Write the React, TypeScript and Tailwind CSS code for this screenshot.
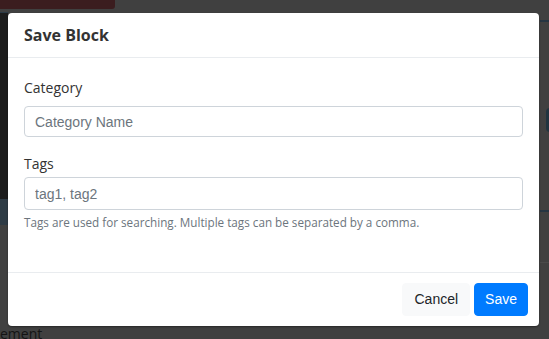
import { useState } from "react";

const sans = "font-['Open_Sans',sans-serif]";
const arial = "font-['Liberation_Sans',Arial,sans-serif]";

// Dimmed page that sits behind the dialog
function BackdropPage() {
  return (
    <div className="flex h-full w-full flex-col bg-[#404040]">
      <div className="h-[9px] w-[115px] rounded-br-[3px] bg-[#3b1d1f]" />
      <div className="flex flex-1">
        <div className="flex w-[8px] flex-col">
          <div className="mt-[3px] h-[1px] bg-[#2b3a46]" />
          <div className="h-[186px] bg-[#1c1c1c]" />
          <div className="h-[26px] bg-[#2e3b45]" />
        </div>
        <div className="flex-1" />
        <div className="flex w-[9px] flex-col">
          <div className="mt-[11px] h-[2px] bg-[#263542]" />
          <div className="mt-[86px] ml-[6px] h-[24px] w-[8px] rounded-full bg-[#21343f]" />
          <div className="mt-[78px] h-[2px] bg-[#263542]" />
          <div className="mt-[50px] h-[1px] bg-[#4a4a4a]" />
        </div>
      </div>
      <div className={`${sans} h-[12px] text-[14px] leading-[14px] text-[#141414]`}>ement</div>
    </div>
  );
}

export default function App() {
  const [category, setCategory] = useState("");
  const [tags, setTags] = useState("");

  return (
    <div className="relative h-[339px] w-[549px] overflow-hidden">
      <BackdropPage />

      {/* Modal */}
      <div className="absolute left-[8px] top-[13px] flex h-[313px] w-[531px] flex-col rounded-[4px] bg-white shadow-[0_1px_2px_rgba(0,0,0,0.4)]">
        <div className="border-b border-[#e9ecef] px-[16px] py-[10px]">
          <h5 className={`${sans} text-[16px] font-bold leading-[24px] text-[#333]`}>Save Block</h5>
        </div>

        <div className="flex-1 px-[16px] pt-[19px]">
          <div className="mb-[16px]">
            <label className={`${sans} mb-[8px] block text-[14px] leading-[21px] text-[#333]`}>Category</label>
            <input
              value={category}
              onChange={(e) => setCategory(e.target.value)}
              placeholder="Category Name"
              className={`${arial} block h-[31px] w-full rounded-[4px] border border-[#ced4da] px-[10px] text-[14px] text-[#495057] outline-none placeholder:text-[#6c757d]`}
            />
          </div>
          <div>
            <label className={`${sans} mb-[3px] block text-[14px] leading-[21px] text-[#333]`}>Tags</label>
            <input
              value={tags}
              onChange={(e) => setTags(e.target.value)}
              placeholder="tag1, tag2"
              className={`${arial} block h-[33px] w-full rounded-[4px] border border-[#ced4da] px-[10px] text-[14px] text-[#495057] outline-none placeholder:text-[#6c757d]`}
            />
            <p className={`${sans} mt-[4px] text-[11.7px] leading-[17px] text-[#6c757d]`}>
              Tags are used for searching. Multiple tags can be separated by a comma.
            </p>
          </div>
        </div>

        <div className="flex justify-end gap-[4px] border-t border-[#e9ecef] px-[11px] pb-[10px] pt-[10px]">
          <button className={`${arial} rounded-[4px] border border-[#f8f9fa] bg-[#f8f9fa] px-[11px] py-[5px] text-[14px] leading-[21px] text-[#212529]`}>
            Cancel
          </button>
          <button className={`${arial} rounded-[4px] border border-[#007bff] bg-[#007bff] px-[10px] py-[5px] text-[14px] leading-[21px] text-white`}>
            Save
          </button>
        </div>
      </div>
    </div>
  );
}
